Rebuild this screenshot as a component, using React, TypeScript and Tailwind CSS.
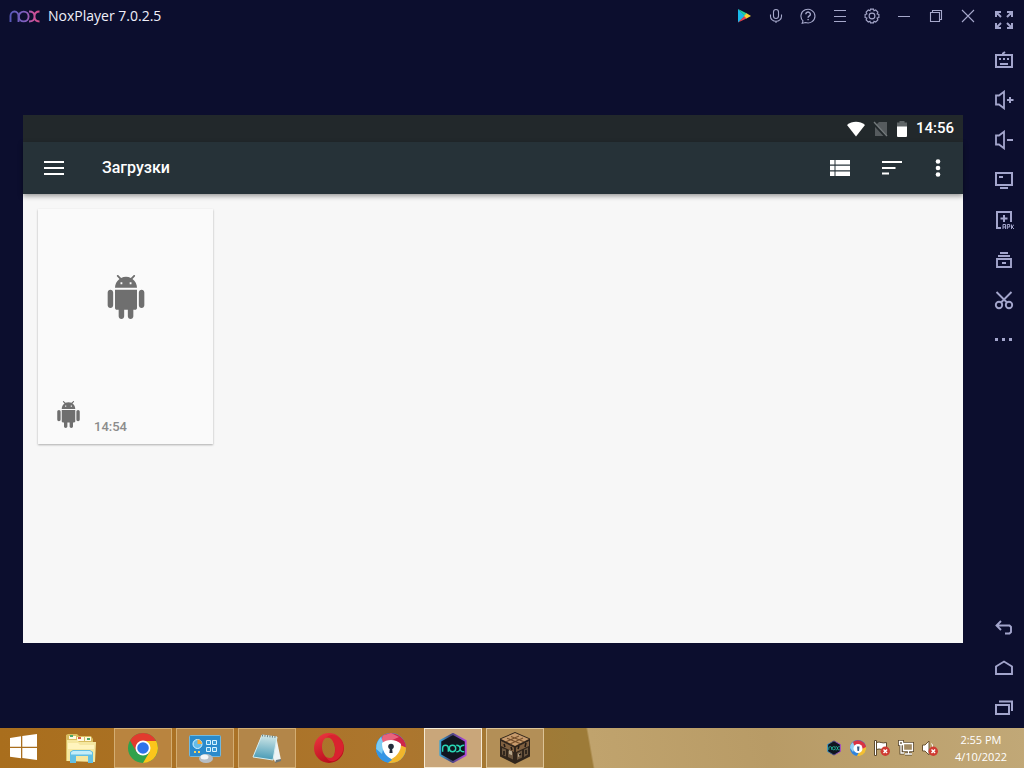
import React from "react";

type IconProps = { children: React.ReactNode; w?: string; box?: string };

function Line({ children, w = "h-5 w-5", box = "0 0 20 20" }: IconProps) {
  return (
    <svg className={w} viewBox={box} fill="none" stroke="currentColor" strokeWidth="2" aria-hidden="true">
      {children}
    </svg>
  );
}

function NoxMark() {
  return (
    <svg className="h-3.5 w-[31px]" viewBox="0 0 31 14" fill="none" aria-hidden="true">
      <defs>
        <linearGradient id="brand" gradientUnits="userSpaceOnUse" x1="0" y1="7" x2="31" y2="7">
          <stop offset="0" stopColor="#5558b8" />
          <stop offset="0.55" stopColor="#8560c0" />
          <stop offset="0.75" stopColor="#c253a0" />
          <stop offset="1" stopColor="#d84c86" />
        </linearGradient>
      </defs>
      <g stroke="url(#brand)" strokeWidth="1.9">
        <path d="M1.500 13V7a4 4.500 0 0 1 8 0v6" />
        <circle cx="14.700" cy="7.500" r="4.900" />
        <path d="M20 2.500c4.500 0 5.500 1.800 5.500 5s-1 5-5.500 5M30.500 2.500c-4 0-5 1.800-5 5s1 5 5 5" />
      </g>
    </svg>
  );
}

const windowTools = [
  {
    label: "Google Play",
    icon: (
      <svg className="h-4 w-4" viewBox="0 0 16 16" aria-hidden="true">
        <path d="M2 1v13.500L9 8z" fill="#19b9ec" />
        <path d="M2 1 11 5.500 8.500 8z" fill="#22d0a0" />
        <path d="M2 14.500 11 10.300 8.500 8z" fill="#e5434f" />
        <path d="M10.500 5.300 15 8l-4.500 2.500L8 8z" fill="#f8d237" />
      </svg>
    ),
  },
  {
    label: "Microphone",
    icon: (
      <Line w="h-4 w-4" box="0 0 16 16">
        <g strokeWidth="1.1"><rect x="5.500" y="1.500" width="5" height="9" rx="2.500" /><path d="M2.500 6.500v2a5.500 4.700 0 0 0 11 0v-2M8 13.200V15" /></g>
      </Line>
    ),
  },
  {
    label: "Help",
    icon: (
      <Line w="h-4 w-4" box="0 0 16 16">
        <g strokeWidth="1.1"><path d="M2.200 15.200 3 12.900A7 6.800 0 1 1 5.600 14.500z" /><path d="M5.800 6.200a2.300 2.100 0 1 1 3.600 1.700c-1 .6-1.300 1-1.300 1.900M8.100 11v1.200" strokeWidth="1.4" /></g>
      </Line>
    ),
  },
  {
    label: "Menu",
    icon: <Line w="h-4 w-4" box="0 0 16 16"><path d="M2 2.500h12M2 8.500h12M2 13.500h12" strokeWidth="1" /></Line>,
  },
  {
    label: "Settings",
    icon: (
      <Line w="h-4 w-4" box="0 0 16 16">
        <g strokeWidth="1.1">
          <path d="M6.500 1.100h3l.5 1.700 1.700-.8 2.200 2.200-.8 1.700 1.800.6v3l-1.800.6.8 1.700-2.200 2.200-1.700-.8-.5 1.700h-3L6 13.200l-1.700.8-2.200-2.200.8-1.700-1.800-.6v-3l1.800-.6-.8-1.700L4.300 2l1.700.8z" />
          <circle cx="8" cy="8" r="2.900" />
        </g>
      </Line>
    ),
  },
  { label: "Minimize", icon: <Line w="h-4 w-4" box="0 0 16 16"><path d="M2 8.500h12" strokeWidth="1" /></Line> },
  {
    label: "Restore",
    icon: <Line w="h-4 w-4" box="0 0 16 16"><path d="M2.500 4.500h9v9h-9zM4.500 4V2.500h9v9H12" strokeWidth="1.1" /></Line>,
  },
  { label: "Close", icon: <Line w="h-4 w-4" box="0 0 16 16"><path d="m2 2 12 12M14 2 2 14" strokeWidth="1.1" /></Line> },
];

const Speaker = () => <path d="M2 5.500v9h3l5 3.800V1.700L5 5.500z" strokeWidth="1.8" />;

const sideTools = [
  {
    label: "Full screen",
    icon: (
      <Line><path d="M2 7V2h5M13 2h5v5M18 13v5h-5M7 18H2v-5M2.500 2.500 7 7M17.500 2.500 13 7M17.500 17.500 13 13M2.500 17.500 7 13" strokeWidth="2" /></Line>
    ),
  },
  {
    label: "Keyboard control",
    icon: <Line><path d="M2 5h16v12H2zM9 5V3.500l2-1.500M6 14h8" /><path d="M5 9h2M9 9h2M13 9h2" /></Line>,
  },
  { label: "Volume up", icon: <Line><Speaker /><path d="M13 10h6.500M16 7v6" /></Line> },
  { label: "Volume down", icon: <Line><Speaker /><path d="M13 10h6" /></Line> },
  { label: "Computer screen", icon: <Line><path d="M2 3h16v12H2zM5 7h4M6 18h8" /></Line> },
  {
    label: "Install APK",
    icon: (
      <Line>
        <path d="M7 18H3V2h14v10M10 5v7M6.500 8.500h7" />
        <path d="M9 19v-4.500h2.500V19M9 17h2.500M13.300 19v-4.500h2.400V17h-2.400M17.500 14.500V19M20 14.500 18 17l2 2" strokeWidth="1" />
      </Line>
    ),
  },
  { label: "Multi instance", icon: <Line><path d="M3 9h14v8H3zM4 6h12M6 3h8M8 13h4" strokeWidth="1.9" /></Line> },
  {
    label: "Screenshot",
    icon: <Line><g strokeWidth="1.9"><circle cx="5" cy="15" r="3.200" /><circle cx="15" cy="15" r="3.200" /><path d="M2.500 2 13 12.500M17.500 2 7 12.500" /></g></Line>,
  },
  { label: "More", icon: <Line><path d="M1 9.500h3M8 9.500h3M15 9.500h3" strokeWidth="3" /></Line> },
];

const navTools = [
  { label: "Back", icon: <Line><path d="M7 3 2.500 7.500 7 12M3 7.500h12.500L17 9v5l-1.500 1.500H11" strokeWidth="1.9" /></Line> },
  { label: "Home", icon: <Line><path d="M2 8.500 10 3.500l8 5V16H2z" strokeWidth="1.9" /></Line> },
  { label: "Recent apps", icon: <Line><path d="M2 7h13v9H2zM5 3.500h13V13" strokeWidth="2" /></Line> },
];

function SideButton({ label, icon }: { label: string; icon: React.ReactNode }) {
  return (
    <button aria-label={label} className="flex h-10 w-10 items-center justify-center text-[#a3a5cc]">
      {icon}
    </button>
  );
}

function AndroidGlyph({ className }: { className: string }) {
  return (
    <svg className={className} viewBox="0 0 24 24" fill="currentColor" aria-hidden="true">
      <path d="M6 18c0 .55.45 1 1 1h1v3.500c0 .83.67 1.500 1.500 1.500s1.500-.67 1.500-1.500V19h2v3.500c0 .83.67 1.500 1.500 1.500s1.500-.67 1.500-1.500V19h1c.55 0 1-.45 1-1V8H6v10zM3.500 8C2.670 8 2 8.670 2 9.500v7c0 .83.67 1.500 1.500 1.500S5 17.330 5 16.500v-7C5 8.670 4.330 8 3.500 8zm17 0c-.83 0-1.500.67-1.500 1.500v7c0 .83.67 1.500 1.500 1.500s1.500-.67 1.500-1.500v-7c0-.83-.67-1.500-1.500-1.500zm-4.970-5.840l1.300-1.300c.2-.2.2-.51 0-.71-.2-.2-.51-.2-.71 0l-1.480 1.480C13.850 1.230 12.950 1 12 1c-.96 0-1.860.23-2.660.63L7.850.15c-.2-.2-.51-.2-.71 0-.2.2-.2.51 0 .71l1.310 1.310C6.970 3.260 6 5.010 6 7h12c0-1.990-.97-3.750-2.470-4.840zM10 5H9V4h1v1zm5 0h-1V4h1v1z" />
    </svg>
  );
}

function StatusIcons() {
  return (
    <div className="mr-2 flex items-center gap-2">
      <svg className="h-4 w-[18px]" viewBox="0 0 18 16" aria-hidden="true">
        <path d="M0 4C5-.3 13-.3 18 4L9 15.500z" fill="#fff" />
      </svg>
      <svg className="h-4 w-[15px]" viewBox="0 0 15 16" aria-hidden="true">
        <path d="M6 1h8v14H2V5z" fill="#565b5e" />
        <path d="M0 1.500 13.500 16" stroke="#22282b" strokeWidth="3" />
        <path d="m1 1 13 14" stroke="#747a7c" strokeWidth="1.4" />
      </svg>
      <svg className="h-4 w-3" viewBox="0 0 12 16" aria-hidden="true">
        <path d="M3.500 0h5v1.500H11V6H1V1.500h2.500z" fill="#5f6567" />
        <path d="M1 5.500h10V15a1 1 0 0 1-1 1H2a1 1 0 0 1-1-1z" fill="#fff" />
      </svg>
    </div>
  );
}

function ChromeIcon({ className }: { className: string }) {
  return (
    <svg className={className} viewBox="0 0 32 32" aria-hidden="true">
      <circle cx="16" cy="16" r="15" fill="#2fa24c" />
      <path d="M3 8.500A15 15 0 0 1 29 8.500L16 16z" fill="#e23b2e" />
      <path d="M3 8.500 9.500 20 16 9z" fill="#e23b2e" />
      <path d="M16 9h13.200A15 15 0 0 1 16 31l6.500-11z" fill="#fbc51b" />
      <circle cx="16" cy="16" r="7.500" fill="#fff" />
      <circle cx="16" cy="16" r="5.800" fill="#2e73ea" />
    </svg>
  );
}

function LockBrowserIcon({ className }: { className: string }) {
  return (
    <svg className={className} viewBox="0 0 32 32" aria-hidden="true">
      <circle cx="16" cy="16" r="15" fill="#3c9fe9" />
      <path d="M8 3.500A15 15 0 0 1 31 15.500l-1 3L16 14 5 12z" fill="#cf2549" />
      <path d="M8 3.500 16 1l8 4-11 5-8 3z" fill="#e8647c" />
      <path d="M31 15.500A15 15 0 0 1 13 30.700L17 20l8-7z" fill="#f1b62c" />
      <path d="M1.500 20A15 15 0 0 1 5 6l3 12 9 10-4 2.700A15 15 0 0 1 1.500 20z" fill="#3495e4" />
      <path d="M1.200 17C1 12 3 8 6 5l3 8-2 9z" fill="#7cccf4" />
      <path d="M7 11c5-4 14-4 19 1 0 7-4 12-9.500 15C10 24 7 18 7 11z" fill="#fff" />
      <circle cx="16" cy="14.500" r="2.800" fill="#222c3b" />
      <path d="M15 15h2l.6 6h-3.200z" fill="#222c3b" />
    </svg>
  );
}

function NoxAppIcon({ id, className }: { id: string; className: string }) {
  return (
    <svg className={className} viewBox="0 0 32 34" fill="none" aria-hidden="true">
      <defs>
        <linearGradient id={id} x1="0" y1="0" x2="1" y2="0">
          <stop offset="0" stopColor="#39a4d4" />
          <stop offset="0.4" stopColor="#424778" />
          <stop offset="1" stopColor="#ae48dd" />
        </linearGradient>
      </defs>
      <path d="m16 2 13.500 7.500v15L16 32 2.500 24.500v-15z" fill="#10151f" stroke={`url(#${id})`} strokeWidth="2" strokeLinejoin="round" />
      <g stroke="#28d9b6" strokeWidth="1.5">
        <path d="M5 21v-4a3 3 0 0 1 6 0v4M19.500 14c3 0 4 1 4 3.500s-1 3.500-4 3.500M28 14c-3 0-4.500 1-4.500 3.500S25 21 28 21" />
        <circle cx="15.500" cy="17.500" r="3.400" />
      </g>
    </svg>
  );
}

function CraftingIcon() {
  return (
    <svg className="h-8 w-8" viewBox="0 0 32 32" aria-hidden="true">
      <path d="m16 0 15 6.500v18L16 32 1 24.500v-18z" fill="#30251b" />
      <path d="m16 1 14 6-14 7L2 7z" fill="#c79a6b" />
      <path d="m12 4.500 13 5.300M8 6.200l13 5.300M20 4 7 9.800M24 6 11 12" stroke="#76502d" strokeWidth="1.1" fill="none" />
      <path d="m2 9 13 6.500V20L2 14zM30 9l-13 6.500V20l13-6z" fill="#806040" />
      <path d="m3 16 4 1.500v7L3 22.500zM9 18.500l5 2v7L9 25zM18 21l5-2.500v7L18 28zM25 17.500l4-2v7L25 25z" fill="#6b563f" />
      <path d="M10 18v4l3 1.200v-4zM19 22l2-1v3l-2 1z" fill="#b8a88e" />
      <path d="m5 12 1 3M12 15l1 3M20 14l-1 3M27 11l-1 4M5 19v4M27 18v4M20 23l2-1" stroke="#211a15" strokeWidth="1.5" />
    </svg>
  );
}

const tasks: { label: string; style: string; icon: React.ReactNode }[] = [
  {
    label: "File Explorer",
    style: "border-transparent",
    icon: (
      <svg className="h-8 w-8" viewBox="0 0 32 32" aria-hidden="true">
        <path d="M1 29V3l2-1h9l2 2h12l2 3v22z" fill="#d8bd60" />
        <path d="M4 4h7v3H4zM12 5h7v4h-7zM20 5h6v4h-6z" fill="#fff9df" />
        <path d="M5 3h3v2H5zM22 6h3v2h-3z" fill="#4ba769" /><path d="M13 5h3v2h-3z" fill="#d85a41" />
        <path d="M2 8h10l2 2h17l-1 20-28-1z" fill="#f5e7a0" />
        <path d="M3 11h10l2 2h14v4H3z" fill="#fff4bd" />
        <path d="M5 31V20l3-2h17l3 2v11h-5v-7H11v7z" fill="#62bfe3" />
        <path d="M6 20.500 8 19h17l2 1.500v2H6z" fill="#c3edf8" />
      </svg>
    ),
  },
  { label: "Google Chrome", style: "border-[#d3ad72] bg-[#b9843f]", icon: <ChromeIcon className="h-8 w-8" /> },
  {
    label: "Control Panel",
    style: "border-[#d3ad72] bg-[#b68545]",
    icon: (
      <svg className="h-8 w-8" viewBox="0 0 32 32" aria-hidden="true">
        <rect x="0.500" y="3.500" width="31" height="21" rx="1" fill="#2a8acb" stroke="#71b9e0" />
        <circle cx="8.500" cy="12" r="4.500" fill="#65bce9" stroke="#d8f3ff" />
        <path d="M8.500 12V7.500A4.500 4.500 0 0 1 13 12z" fill="#f7aa36" />
        <path d="M17.500 8.500h4v4h-4zM23.500 8.500h4v4h-4zM17.500 15.500h4v4h-4zM23.500 15.500h4v4h-4z" fill="#3c9cd6" stroke="#d8f3ff" />
        <path d="M5 20h2M9 20h2" stroke="#f5d15d" strokeWidth="2" />
        <ellipse cx="17" cy="26.500" rx="7" ry="4.500" fill="#b5bdc4" /><ellipse cx="15.500" cy="25" rx="4" ry="2.500" fill="#f2f5f7" />
      </svg>
    ),
  },
  {
    label: "Notepad",
    style: "border-[#d3ad72] bg-[#b38649]",
    icon: (
      <svg className="h-8 w-8" viewBox="0 0 32 32" aria-hidden="true">
        <defs><linearGradient id="pad" x1="0.5" y1="0" x2="0.4" y2="1"><stop offset="0" stopColor="#d2e8e8" /><stop offset="1" stopColor="#4398b4" /></linearGradient></defs>
        <path d="m25 4 5 24-6 2-3-7z" fill="#edf3f4" /><path d="m25 28 5-1v2l-6 2z" fill="#69767a" />
        <path d="m11 3 15 2-4 23L2 25z" fill="url(#pad)" stroke="#d6edf0" />
        <path d="m11 3.500 14 1.500" stroke="#687f80" strokeWidth="2" strokeDasharray="1 1.5" />
      </svg>
    ),
  },
  {
    label: "Opera",
    style: "border-transparent",
    icon: (
      <svg className="h-8 w-8" viewBox="0 0 32 32" aria-hidden="true">
        <defs><linearGradient id="opera" x1="0" y1="0" x2="0.5" y2="1"><stop stopColor="#ef3941" /><stop offset="1" stopColor="#b90f1d" /></linearGradient></defs>
        <path fillRule="evenodd" d="M16 1a15 15 0 1 1 0 30 15 15 0 0 1 0-30zm-1 4.500c-4 0-6 4-6 9.500 0 6 4 12 8 12s5-5 5-10-3-11.500-7-11.500z" fill="url(#opera)" />
        <path d="M13 6c4-6 13-3 17 6 2 7-3 15-9 17-3 1-6 0-8-4 8 4 10-4 9-10S18 4 13 6z" fill="#d9222f" />
      </svg>
    ),
  },
  { label: "Secure Browser", style: "border-transparent", icon: <LockBrowserIcon className="h-8 w-8" /> },
  { label: "NoxPlayer", style: "border-[#f5ead5] bg-[#c9a67a]", icon: <NoxAppIcon id="taskHex" className="h-8 w-8" /> },
  { label: "Crafting game", style: "border-[#dcc396] bg-[#b38f57]", icon: <CraftingIcon /> },
];

function RedCross() {
  return (
    <g>
      <circle cx="11.300" cy="11.300" r="4.700" fill="#cf3b32" />
      <path d="m9.500 9.500 3.600 3.600M13.100 9.500l-3.600 3.600" stroke="#fff" strokeWidth="1.4" />
    </g>
  );
}

const tray = [
  { label: "NoxPlayer tray", icon: <NoxAppIcon id="trayHex" className="h-4 w-4" /> },
  {
    label: "Browser tray",
    icon: (
      <svg className="h-4 w-4" viewBox="0 0 16 16" aria-hidden="true">
        <circle cx="8" cy="8" r="8" fill="#2e83dd" />
        <path d="M2 3a8 8 0 0 1 14 5l-5 2L2 6z" fill="#d93343" />
        <path d="M16 7a8 8 0 0 1-9 9l3-6z" fill="#f4bf32" />
        <path d="M0 8a8 8 0 0 1 3-6l2 6-2 4z" fill="#90d0f2" />
        <circle cx="8" cy="8.500" r="4.500" fill="#fff" />
        <path d="M7 6.500h2.500L9 11H7.500z" fill="#355a86" />
      </svg>
    ),
  },
  {
    label: "Action Center",
    icon: (
      <svg className="h-4 w-4" viewBox="0 0 16 16" aria-hidden="true">
        <path d="M.5.500h2v15h-2zM2.500 2.500c4-1.500 5 1.500 10 0v7c-5 1-6-1.500-10 0z" fill="#fff" stroke="#5e4b2f" />
        <RedCross />
      </svg>
    ),
  },
  {
    label: "Network",
    icon: (
      <svg className="h-4 w-4" viewBox="0 0 16 16" fill="none" aria-hidden="true">
        <path d="M5.500 3.500h9v7h-9zM7 14h7M10.500 11v3M1.500 1.500h3v3h-3zM3 5v8h3" stroke="#5b482c" strokeWidth="3" />
        <path d="M5.500 3.500h9v7h-9z" fill="#a28a62" />
        <path d="M5.500 3.500h9v7h-9zM7 14h7M10.500 11v3M1.500 1.500h3v3h-3zM3 5v8h3" stroke="#fff" strokeWidth="1.3" />
      </svg>
    ),
  },
  {
    label: "Volume",
    icon: (
      <svg className="h-4 w-4" viewBox="0 0 16 16" aria-hidden="true">
        <path d="M.5 5H3l4-4v14l-4-4H.5z" fill="#fff" stroke="#6b5533" />
        <path d="M9.500 3.500Q11 5 10.500 7" stroke="#fff" fill="none" />
        <RedCross />
      </svg>
    ),
  },
];

export default function App() {
  return (
    <div className="flex min-h-screen flex-col bg-[#0c0e2e] font-['Open_Sans',sans-serif]">
      <div className="flex flex-1">
        <div className="flex min-w-0 flex-1 flex-col">
          <header className="flex h-8 items-center justify-between pl-[9px]">
            <div className="flex items-center gap-2">
              <NoxMark />
              <h1 className="text-sm text-[#f0f0fa]">NoxPlayer 7.0.2.5</h1>
            </div>
            <div className="flex">
              {windowTools.map((t) => (
                <button key={t.label} aria-label={t.label} className="flex h-8 w-8 items-center justify-center text-[#a6a8cb]">
                  {t.icon}
                </button>
              ))}
            </div>
          </header>

          <div className="flex flex-1 flex-col pt-[83px] pr-[21px] pb-[85px] pl-[23px] font-[Roboto,sans-serif]">
            <main className="flex flex-1 flex-col bg-[#f7f7f7]">
              <div className="flex h-[27px] items-center justify-end bg-[#22282b] pr-[9px] text-[15px] font-medium text-white">
                <StatusIcons />
                <span>14:56</span>
              </div>
              <div className="flex h-[52px] items-center bg-[#263238] pr-[15px] pl-5 text-white shadow-[0_2px_5px_rgba(0,0,0,0.4)]">
                <button aria-label="Open navigation" className="flex h-6 w-[22px] items-center justify-center">
                  <svg className="h-4 w-5" viewBox="0 0 20 16" aria-hidden="true"><path d="M0 2h20M0 8h20M0 14h20" stroke="currentColor" strokeWidth="2.2" /></svg>
                </button>
                <h2 className="ml-[37px] flex-1 text-base font-medium">Загрузки</h2>
                <button aria-label="List view" className="mr-8 flex h-6 w-5 items-center justify-center">
                  <svg className="h-4 w-5" viewBox="0 0 20 16" fill="currentColor" aria-hidden="true">
                    <path d="M0 0h4.500v4.500H0zM0 5.750h4.500v4.500H0zM0 11.500h4.500V16H0zM5.500 0H20v4.500H5.500zM5.500 5.750H20v4.500H5.500zM5.500 11.500H20V16H5.500z" />
                  </svg>
                </button>
                <button aria-label="Sort" className="mr-[26px] flex h-6 w-5 items-center justify-center">
                  <svg className="h-4 w-5" viewBox="0 0 20 16" aria-hidden="true"><path d="M0 2h20M0 8h13.500M0 13.500h7" stroke="currentColor" strokeWidth="2.2" /></svg>
                </button>
                <button aria-label="More options" className="flex h-6 w-5 items-center justify-center">
                  <svg className="h-5 w-1.5" viewBox="0 0 6 20" fill="currentColor" aria-hidden="true"><circle cx="3" cy="3.500" r="2.300" /><circle cx="3" cy="10" r="2.300" /><circle cx="3" cy="16.500" r="2.300" /></svg>
                </button>
              </div>
              <div className="flex-1 p-[15px]">
                <button aria-label="Android file, 14:54" className="flex h-[235px] w-[175px] flex-col bg-[#fafafa] text-[#6f6f6f] shadow-[0_1px_2px_rgba(0,0,0,0.3)]">
                  <span className="flex h-[176px] w-full items-center justify-center">
                    <AndroidGlyph className="h-11 w-11" />
                  </span>
                  <span className="flex w-full items-start gap-3 pt-4 pl-[17px]">
                    <AndroidGlyph className="h-[27px] w-[27px]" />
                    <span className="pt-4 text-[13px] leading-5 font-medium text-[#8b8b8b]">14:54</span>
                  </span>
                </button>
              </div>
            </main>
          </div>
        </div>

        <aside className="flex w-10 flex-col justify-between">
          <div>{sideTools.map((t) => <SideButton key={t.label} {...t} />)}</div>
          <div>{navTools.map((t) => <SideButton key={t.label} {...t} />)}</div>
        </aside>
      </div>

      <footer className="flex h-10 items-stretch bg-[linear-gradient(80deg,transparent_57.5%,#c0a36d_57.7%,#b89b66_75%,#c1a877_100%),linear-gradient(90deg,#a96e1d,#ac762e_40%,#9d7b38_56%)]">
        <button aria-label="Start" className="mr-1 flex w-12 items-center justify-center">
          <svg className="h-7 w-7" viewBox="0 0 28 28" fill="#fff" aria-hidden="true">
            <path d="m0 4 11-1.700v10.400H0zM12.300 2.100 27 0v12.700H12.300zM0 14h11v10.300L0 22.700zM12.300 14H27v12L12.300 24z" />
          </svg>
        </button>
        <nav className="flex gap-1">
          {tasks.map((t) => (
            <button key={t.label} aria-label={t.label} className={`flex w-[58px] items-center justify-center border ${t.style}`}>
              {t.icon}
            </button>
          ))}
        </nav>
        <div className="ml-auto flex items-center gap-2 pr-[17px]">
          {tray.map((t) => (
            <button key={t.label} aria-label={t.label} className="flex h-5 w-4 items-center justify-center">{t.icon}</button>
          ))}
          <time className="ml-[9px] text-center text-[11px] leading-[17px] text-white">
            <span className="block">2:55 PM</span>
            <span className="block">4/10/2022</span>
          </time>
        </div>
      </footer>
    </div>
  );
}
